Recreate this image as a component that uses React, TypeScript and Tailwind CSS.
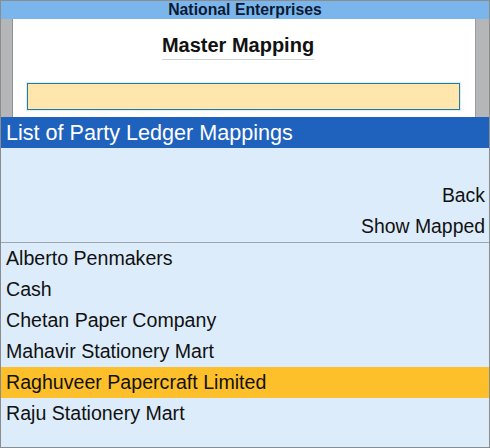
import React from "react";

const parties = [
  "Alberto Penmakers",
  "Cash",
  "Chetan Paper Company",
  "Mahavir Stationery Mart",
  "Raghuveer Papercraft Limited",
  "Raju Stationery Mart",
];

const selected = "Raghuveer Papercraft Limited";

export default function App() {
  return (
    <div
      className="w-[490px] h-[448px] border border-[#8c8c8c] flex flex-col overflow-hidden"
      style={{ fontFamily: '"Liberation Sans", Arial, sans-serif' }}
    >
      {/* company title bar */}
      <div className="h-[18px] bg-[#7ab6ec] flex items-center justify-center">
        <span className="text-[15.8px] font-bold leading-none text-[#0d1a33]">
          National Enterprises
        </span>
      </div>

      {/* report header panel */}
      <div className="h-[98px] flex">
        <div className="w-[12px] bg-[#b4b6b8] border-r border-[#8f9194]" />
        <div className="flex-1 bg-white flex flex-col items-center">
          <div className="mt-[14px] mr-[12px] text-[20px] font-bold leading-[24px] text-[#111] border-b border-[#cfd2d6] pb-[2px]">
            Master Mapping
          </div>
          <div className="mt-[23px] self-start ml-[14px] w-[433px] h-[27px] bg-[#ffe6ac] border border-[#2a78a0] shadow-[0_0_0_1px_#d6f1f6]" />
        </div>
        <div className="w-[14px] bg-[#b4b6b8] border-l border-[#9a9c9f]" />
      </div>

      {/* list header */}
      <div className="h-[31px] bg-[#1f62bd] flex items-center px-[5px]">
        <span className="text-[21.6px] leading-none text-white">
          List of Party Ledger Mappings
        </span>
      </div>

      {/* list body */}
      <div className="flex-1 bg-[#dcecfa] flex flex-col text-[#111]">
        <div className="h-[32px]" />
        <div className="h-[31px] flex items-center justify-end pr-[4px] text-[19.4px] leading-none">
          Back
        </div>
        <div className="h-[31px] flex items-center justify-end pr-[4px] text-[19.4px] leading-none">
          Show Mapped
        </div>
        <div className="h-px bg-[#9ea6b0]" />
        {parties.map((p) => (
          <div
            key={p}
            className={`h-[31px] flex items-center px-[5px] text-[19.6px] leading-none ${
              p === selected ? "bg-[#fdbf2a]" : ""
            }`}
          >
            {p}
          </div>
        ))}
      </div>
    </div>
  );
}
